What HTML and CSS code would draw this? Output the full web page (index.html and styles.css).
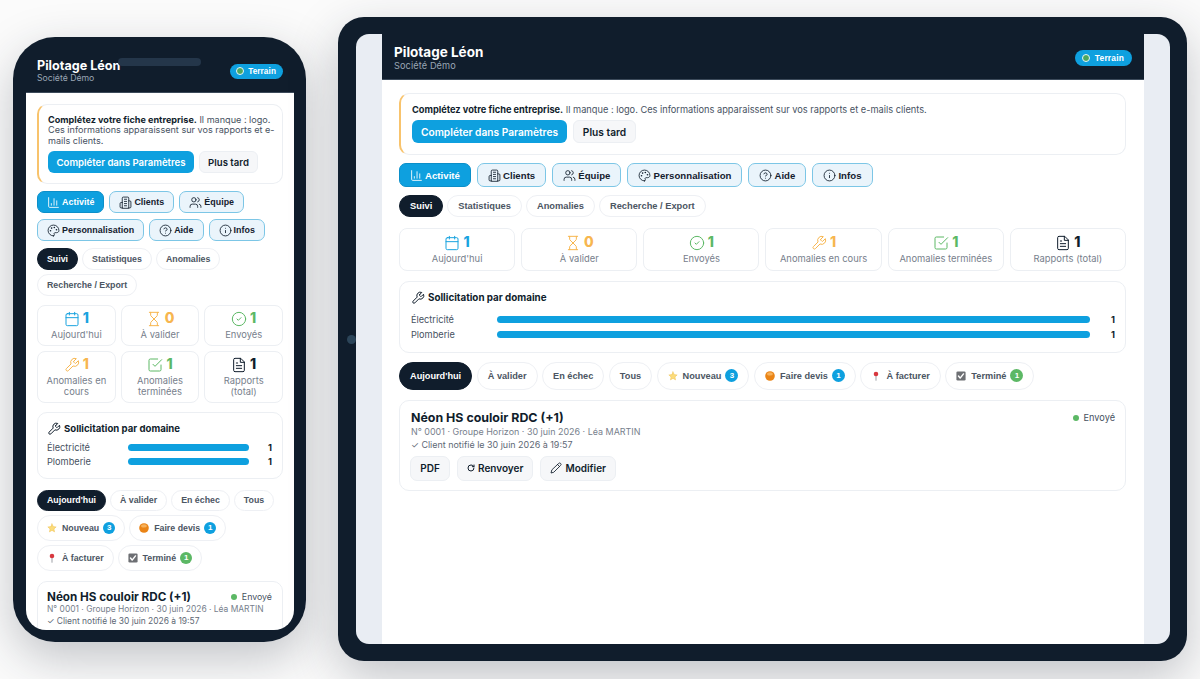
FILE: index.html
```html
<!DOCTYPE html>
<html lang="fr">
<head>
<meta charset="utf-8">
<title>Pilotage Léon</title>
<meta name="viewport" content="width=device-width">
<link rel="stylesheet" href="styles.css">
</head>
<body>

<!-- icons -->
<svg class="sprite" xmlns="http://www.w3.org/2000/svg">
  <symbol id="i-chart" viewBox="0 0 24 24"><path d="M3 3v16a2 2 0 0 0 2 2h16M18 17V9M13 17V5M8 17v-3"/></symbol>
  <symbol id="i-building" viewBox="0 0 24 24"><path d="M6 22V4a2 2 0 0 1 2-2h8a2 2 0 0 1 2 2v18ZM6 12H4a2 2 0 0 0-2 2v6a2 2 0 0 0 2 2h2M18 9h2a2 2 0 0 1 2 2v9a2 2 0 0 1-2 2h-2M10 6h4M10 10h4M10 14h4M10 18h4"/></symbol>
  <symbol id="i-users" viewBox="0 0 24 24"><path d="M16 21v-2a4 4 0 0 0-4-4H6a4 4 0 0 0-4 4v2M22 21v-2a4 4 0 0 0-3-3.87M16 3.13a4 4 0 0 1 0 7.75"/><circle cx="9" cy="7" r="4"/></symbol>
  <symbol id="i-palette" viewBox="0 0 24 24"><path d="M12 22a10 10 0 1 1 10-10c0 2.5-2 4-4.5 4H15a2 2 0 0 0-1.5 3.3c.5.6.3 2.7-1.5 2.7z"/><path class="dots" d="M13.5 6.5h.01M17.5 10.5h.01M8.5 7.5h.01M6.5 12.5h.01"/></symbol>
  <symbol id="i-help" viewBox="0 0 24 24"><circle cx="12" cy="12" r="10"/><path d="M9.09 9a3 3 0 0 1 5.83 1c0 2-3 3-3 3M12 17h.01"/></symbol>
  <symbol id="i-info" viewBox="0 0 24 24"><circle cx="12" cy="12" r="10"/><path d="M12 16v-4M12 8h.01"/></symbol>
  <symbol id="i-calendar" viewBox="0 0 24 24"><rect x="3" y="4" width="18" height="18" rx="2"/><path d="M16 2v4M8 2v4M3 10h18"/></symbol>
  <symbol id="i-hourglass" viewBox="0 0 24 24"><path d="M5 22h14M5 2h14M17 22v-4.172a2 2 0 0 0-.586-1.414L12 12l-4.414 4.414A2 2 0 0 0 7 17.828V22M7 2v4.172a2 2 0 0 0 .586 1.414L12 12l4.414-4.414A2 2 0 0 0 17 6.172V2"/></symbol>
  <symbol id="i-check" viewBox="0 0 24 24"><circle cx="12" cy="12" r="10"/><path d="m9 12 2 2 4-4"/></symbol>
  <symbol id="i-wrench" viewBox="0 0 24 24"><path d="M14.7 6.3a1 1 0 0 0 0 1.4l1.6 1.6a1 1 0 0 0 1.4 0l3.77-3.77a6 6 0 0 1-7.94 7.94l-6.91 6.91a2.12 2.12 0 0 1-3-3l6.91-6.91a6 6 0 0 1 7.94-7.94l-3.76 3.76z"/></symbol>
  <symbol id="i-done" viewBox="0 0 24 24"><path d="m9 11 3 3L22 4M21 12v7a2 2 0 0 1-2 2H5a2 2 0 0 1-2-2V5a2 2 0 0 1 2-2h11"/></symbol>
  <symbol id="i-file" viewBox="0 0 24 24"><path d="M14 2H6a2 2 0 0 0-2 2v16a2 2 0 0 0 2 2h12a2 2 0 0 0 2-2V8zM14 2v6h6M16 13H8M16 17H8M10 9H8"/></symbol>
  <symbol id="i-rotate" viewBox="0 0 24 24"><path d="M21 12a9 9 0 1 1-9-9c2.52 0 4.93 1 6.74 2.74L21 8M21 3v5h-5"/></symbol>
  <symbol id="i-pencil" viewBox="0 0 24 24"><path d="M17 3a2.85 2.83 0 1 1 4 4L7.5 20.5 2 22l1.5-5.5ZM15 5l4 4"/></symbol>
  <symbol id="e-star" viewBox="0 0 24 24"><path class="solid" fill="#fbdc7c" stroke="#eebb45" d="m12 2 3 6.600 7 .8-5.200 4.800 1.400 7.100L12 17.700l-6.200 3.600 1.400-7.100L2 9.400l7-.8z"/></symbol>
  <symbol id="e-orange" viewBox="0 0 24 24"><circle class="solid" cx="12" cy="12" r="11.500" fill="#ea8416" stroke="none"/><ellipse class="solid" cx="12" cy="7" rx="7" ry="4" fill="#f7b15a" stroke="none"/></symbol>
  <symbol id="e-pin" viewBox="0 0 24 24"><path class="pin" d="M12 11v11"/><circle class="solid" cx="12" cy="7" r="5.500" fill="#d8383f" stroke="none"/></symbol>
  <symbol id="e-box" viewBox="0 0 24 24"><rect class="solid" x="1" y="1" width="22" height="22" rx="3" fill="#6d6f73" stroke="none"/><path class="tick" d="m6 12 4 5 8-10"/></symbol>
</svg>

<!-- phone -->
<section class="device phone">
  <div class="notch"></div>
  <div class="screen">
    <div class="app">
      <header class="topbar">
        <div>
          <h1>Pilotage Léon</h1>
          <p>Société Démo</p>
        </div>
        <span class="terrain"><i></i>Terrain</span>
      </header>
      <main class="content">
        <div class="notice">
          <p><b>Complétez votre fiche entreprise.</b> Il manque : logo. Ces informations apparaissent sur vos rapports et e-mails clients.</p>
          <div class="notice-actions">
            <button class="btn-primary">Compléter dans Paramètres</button>
            <button class="btn-light">Plus tard</button>
          </div>
        </div>
        <nav class="nav">
          <a class="nav-item active"><svg><use href="#i-chart"/></svg>Activité</a>
          <a class="nav-item"><svg><use href="#i-building"/></svg>Clients</a>
          <a class="nav-item"><svg><use href="#i-users"/></svg>Équipe</a>
          <a class="nav-item"><svg><use href="#i-palette"/></svg>Personnalisation</a>
          <a class="nav-item"><svg><use href="#i-help"/></svg>Aide</a>
          <a class="nav-item"><svg><use href="#i-info"/></svg>Infos</a>
        </nav>
        <div class="tabs">
          <a class="tab active">Suivi</a>
          <a class="tab">Statistiques</a>
          <a class="tab">Anomalies</a>
          <a class="tab">Recherche / Export</a>
        </div>
        <div class="kpis">
          <div class="kpi blue"><div class="kpi-num"><svg><use href="#i-calendar"/></svg>1</div><span>Aujourd'hui</span></div>
          <div class="kpi orange"><div class="kpi-num"><svg><use href="#i-hourglass"/></svg>0</div><span>À valider</span></div>
          <div class="kpi green"><div class="kpi-num"><svg><use href="#i-check"/></svg>1</div><span>Envoyés</span></div>
          <div class="kpi orange"><div class="kpi-num"><svg><use href="#i-wrench"/></svg>1</div><span>Anomalies en cours</span></div>
          <div class="kpi green"><div class="kpi-num"><svg><use href="#i-done"/></svg>1</div><span>Anomalies terminées</span></div>
          <div class="kpi dark"><div class="kpi-num"><svg><use href="#i-file"/></svg>1</div><span>Rapports (total)</span></div>
        </div>
        <div class="panel">
          <h2><svg><use href="#i-wrench"/></svg>Sollicitation par domaine</h2>
          <div class="bar-row"><span>Électricité</span><div class="bar"></div><b>1</b></div>
          <div class="bar-row"><span>Plomberie</span><div class="bar"></div><b>1</b></div>
        </div>
        <div class="filters">
          <a class="filter active">Aujourd'hui</a>
          <a class="filter">À valider</a>
          <a class="filter">En échec</a>
          <a class="filter">Tous</a>
          <a class="filter"><svg><use href="#e-star"/></svg>Nouveau<em>3</em></a>
          <a class="filter"><svg><use href="#e-orange"/></svg>Faire devis<em>1</em></a>
          <a class="filter"><svg><use href="#e-pin"/></svg>À facturer</a>
          <a class="filter"><svg><use href="#e-box"/></svg>Terminé<em class="ok">1</em></a>
        </div>
        <article class="job">
          <div class="job-head">
            <h3>Néon HS couloir RDC (+1)</h3>
            <span class="status"><i></i>Envoyé</span>
          </div>
          <p>N° 0001 · Groupe Horizon · 30 juin 2026 · Léa MARTIN</p>
          <p>✓ Client notifié le 30 juin 2026 à 19:57</p>
        </article>
      </main>
    </div>
  </div>
</section>

<!-- tablet -->
<section class="device tablet">
  <div class="camera"></div>
  <div class="screen">
    <div class="app">
      <header class="topbar">
        <div>
          <h1>Pilotage Léon</h1>
          <p>Société Démo</p>
        </div>
        <span class="terrain"><i></i>Terrain</span>
      </header>
      <main class="content">
        <div class="notice">
          <p><b>Complétez votre fiche entreprise.</b> Il manque : logo. Ces informations apparaissent sur vos rapports et e-mails clients.</p>
          <div class="notice-actions">
            <button class="btn-primary">Compléter dans Paramètres</button>
            <button class="btn-light">Plus tard</button>
          </div>
        </div>
        <nav class="nav">
          <a class="nav-item active"><svg><use href="#i-chart"/></svg>Activité</a>
          <a class="nav-item"><svg><use href="#i-building"/></svg>Clients</a>
          <a class="nav-item"><svg><use href="#i-users"/></svg>Équipe</a>
          <a class="nav-item"><svg><use href="#i-palette"/></svg>Personnalisation</a>
          <a class="nav-item"><svg><use href="#i-help"/></svg>Aide</a>
          <a class="nav-item"><svg><use href="#i-info"/></svg>Infos</a>
        </nav>
        <div class="tabs">
          <a class="tab active">Suivi</a>
          <a class="tab">Statistiques</a>
          <a class="tab">Anomalies</a>
          <a class="tab">Recherche / Export</a>
        </div>
        <div class="kpis">
          <div class="kpi blue"><div class="kpi-num"><svg><use href="#i-calendar"/></svg>1</div><span>Aujourd'hui</span></div>
          <div class="kpi orange"><div class="kpi-num"><svg><use href="#i-hourglass"/></svg>0</div><span>À valider</span></div>
          <div class="kpi green"><div class="kpi-num"><svg><use href="#i-check"/></svg>1</div><span>Envoyés</span></div>
          <div class="kpi orange"><div class="kpi-num"><svg><use href="#i-wrench"/></svg>1</div><span>Anomalies en cours</span></div>
          <div class="kpi green"><div class="kpi-num"><svg><use href="#i-done"/></svg>1</div><span>Anomalies terminées</span></div>
          <div class="kpi dark"><div class="kpi-num"><svg><use href="#i-file"/></svg>1</div><span>Rapports (total)</span></div>
        </div>
        <div class="panel">
          <h2><svg><use href="#i-wrench"/></svg>Sollicitation par domaine</h2>
          <div class="bar-row"><span>Électricité</span><div class="bar"></div><b>1</b></div>
          <div class="bar-row"><span>Plomberie</span><div class="bar"></div><b>1</b></div>
        </div>
        <div class="filters">
          <a class="filter active">Aujourd'hui</a>
          <a class="filter">À valider</a>
          <a class="filter">En échec</a>
          <a class="filter">Tous</a>
          <a class="filter"><svg><use href="#e-star"/></svg>Nouveau<em>3</em></a>
          <a class="filter"><svg><use href="#e-orange"/></svg>Faire devis<em>1</em></a>
          <a class="filter"><svg><use href="#e-pin"/></svg>À facturer</a>
          <a class="filter"><svg><use href="#e-box"/></svg>Terminé<em class="ok">1</em></a>
        </div>
        <article class="job">
          <div class="job-head">
            <h3>Néon HS couloir RDC (+1)</h3>
            <span class="status"><i></i>Envoyé</span>
          </div>
          <p>N° 0001 · Groupe Horizon · 30 juin 2026 · Léa MARTIN</p>
          <p>✓ Client notifié le 30 juin 2026 à 19:57</p>
          <div class="job-actions">
            <button class="btn-light"><span>PDF</span></button>
            <button class="btn-light"><svg class="tiny"><use href="#i-rotate"/></svg>Renvoyer</button>
            <button class="btn-light"><svg><use href="#i-pencil"/></svg>Modifier</button>
          </div>
        </article>
      </main>
    </div>
  </div>
</section>

</body>
</html>
```

FILE: styles.css
```css
* {
  box-sizing: border-box;
}

html, body {
  margin: 0;
  padding: 0;
}

body {
  position: relative;
  width: 1200px;
  height: 679px;
  overflow: hidden;
  background: #fbfbfb;
  color: #101d2c;
  font-family: "Inter", "Liberation Sans", sans-serif;
  font-size: 9.5px;
}

h1, h2, h3, p {
  margin: 0;
}

.sprite {
  position: absolute;
  width: 0;
  height: 0;
}

svg {
  fill: none;
  stroke: currentColor;
  stroke-width: 1.7;
  stroke-linecap: round;
  stroke-linejoin: round;
  flex: none;
}

.dots { stroke-width: 3; }
.solid { stroke-width: 1; }
.pin { stroke: #a0a3a9; stroke-width: 2.5; }
.tick { stroke: #fff; stroke-width: 3.5; }

/* devices */
.device {
  position: absolute;
  background: #101d2c;
  box-shadow: 0 16px 48px rgba(30, 40, 55, 0.26);
}

.phone {
  left: 13px;
  top: 37px;
  width: 293px;
  height: 605px;
  padding: 13px 12px 12px 13px;
  border-radius: 42px;
}

.tablet {
  left: 338px;
  top: 17px;
  width: 849px;
  height: 644px;
  padding: 17px 17px 17px 18px;
  border-radius: 26px;
}

.notch {
  position: absolute;
  left: 105px;
  top: 21px;
  width: 83px;
  height: 8px;
  border-radius: 4px;
  background: #24364a;
  z-index: 2;
}

.camera {
  position: absolute;
  left: 9px;
  top: 318px;
  width: 9px;
  height: 9px;
  border-radius: 50%;
  background: #2c4559;
}

.screen {
  height: 100%;
  overflow: hidden;
  background: #e9edf3;
}

.phone .screen {
  border-radius: 0 0 20px 20px;
}

.tablet .screen {
  border-radius: 13px;
  display: flex;
  justify-content: center;
}

.app {
  width: 100%;
  background: #fff;
}

.tablet .app {
  width: 762px;
}

/* header */
.topbar {
  display: flex;
  align-items: center;
  justify-content: space-between;
  height: 43px;
  padding: 0 11px;
  background: #101d2c;
  border-bottom: 1px solid #3c4a5a;
}

.tablet .topbar {
  height: 46px;
  padding: 2px 12px 0;
}

.topbar h1 {
  color: #fff;
  font-size: 12.6px;
  line-height: 14px;
  font-weight: 700;
}

.tablet .topbar h1 {
  font-size: 13.5px;
  line-height: 15px;
}

.topbar p {
  color: #9aa6b4;
  font-size: 8.7px;
  line-height: 10px;
}

.tablet .topbar p {
  font-size: 9.2px;
  line-height: 11px;
  letter-spacing: 0.1px;
}

.terrain {
  display: flex;
  align-items: center;
  gap: 4px;
  height: 15px;
  padding: 0 7px 0 6px;
  border-radius: 8px;
  background: #0ea0df;
  color: #fff;
  font-family: "Liberation Sans", sans-serif;
  font-size: 8.2px;
  font-weight: 700;
  letter-spacing: 0.1px;
}

.tablet .terrain {
  gap: 5px;
  height: 16px;
  padding: 0 8px 0 7px;
  font-size: 8.4px;
  letter-spacing: 0.2px;
}

.terrain i {
  width: 8px;
  height: 8px;
  border-radius: 50%;
  background: #4da85e;
  border: 1.5px solid #e3f5fd;
}

/* content */
.content {
  display: flex;
  flex-direction: column;
  gap: 7px;
  padding: 11px 11px 0;
}

.tablet .content {
  gap: 8px;
  padding: 13px 18px 0 17px;
}

.notice {
  padding: 9.5px 5px 10px 9px;
  border: 1px solid #eceff3;
  border-left: 2px solid #f8c36c;
  border-radius: 10px;
  line-height: 10.5px;
  font-size: 9.1px;
  color: #47525f;
}

.tablet .notice {
  padding: 10.5px 12px 11px 11px;
  font-size: 9.24px;
}

.notice b {
  color: #101d2c;
  font-weight: 700;
}

.notice-actions {
  display: flex;
  gap: 5px;
  margin-top: 5px;
}

.tablet .notice-actions {
  margin-top: 5px;
  gap: 6px;
}

button {
  font-family: "Inter", "Liberation Sans", sans-serif;
  font-weight: 600;
  cursor: pointer;
}

.btn-primary {
  height: 22px;
  padding: 0 8px;
  width: 146px;
  border: 0;
  border-radius: 6px;
  background: #0ea0df;
  color: #fff;
  font-size: 9.6px;
  white-space: nowrap;
}

.tablet .btn-primary {
  width: 155px;
  height: 23px;
  font-size: 10.2px;
}

.btn-light {
  display: inline-flex;
  align-items: center;
  justify-content: center;
  gap: 4px;
  height: 22px;
  width: 59px;
  border: 1px solid #eceff3;
  border-radius: 6px;
  background: #f6f7f9;
  color: #101d2c;
  font-size: 9.6px;
}

.tablet .btn-light {
  width: 63px;
  height: 23px;
  font-size: 10.2px;
}

.btn-light svg {
  width: 12px;
  height: 12px;
}

.btn-light svg.tiny {
  width: 8px;
  height: 8px;
  stroke-width: 3;
}

/* main nav */
.nav {
  display: flex;
  flex-wrap: wrap;
  gap: 6px 5px;
}

.tablet .nav {
  gap: 6px;
}

.nav-item {
  display: flex;
  align-items: center;
  gap: 2px;
  height: 22px;
  padding: 0 9px;
  border: 1px solid #7cc6e6;
  border-radius: 7px;
  background: #eaf4fb;
  color: #14202e;
  font-family: "Liberation Sans", sans-serif;
  font-size: 8.9px;
  font-weight: 700;
  letter-spacing: 0.04px;
}

.tablet .nav-item {
  height: 24px;
  padding: 0 10px;
  font-size: 9.6px;
}

.nav-item svg {
  width: 13px;
  height: 13px;
  stroke-width: 1.6;
}

.nav-item.active {
  background: #0ea0df;
  border-color: #0b8fc9;
  color: #fff;
}

/* tabs and filters */
.tabs, .filters {
  display: flex;
  flex-wrap: wrap;
  gap: 4px;
}

.tab, .filter {
  display: flex;
  align-items: center;
  border: 1px solid #eef0f4;
  border-radius: 13px;
  background: #fff;
  color: #4c5663;
  font-family: "Liberation Sans", sans-serif;
  font-size: 8.8px;
  font-weight: 700;
}

.tab {
  height: 22px;
  padding: 0 9px;
}

.tablet .tab {
  padding: 0 10px;
  font-size: 9.3px;
}

.tab.active, .filter.active {
  background: #101d2c;
  border-color: #101d2c;
  color: #fff;
}

.filter {
  height: 21px;
  padding: 0 9px;
}

.filter svg {
  width: 10px;
  height: 10px;
  margin-right: 5px;
}

.filter em {
  display: flex;
  align-items: center;
  justify-content: center;
  width: 12px;
  height: 12px;
  margin-left: 4px;
  border-radius: 50%;
  background: #0ea0df;
  color: #fff;
  font-style: normal;
  font-size: 8px;
}

.filter em.ok {
  background: #5cb865;
}

.phone .filter:nth-child(n+5) {
  height: 26px;
}

.tablet .filters {
  gap: 4.5px;
}

.tablet .filter {
  height: 28px;
  padding: 0 10px;
  border-radius: 14px;
  font-size: 9.2px;
}

.tablet .filter em {
  width: 13px;
  height: 13px;
}

/* counters */
.kpis {
  display: grid;
  grid-template-columns: repeat(3, 1fr);
  gap: 5px;
  margin-top: 2px;
}

.tablet .kpis {
  grid-template-columns: repeat(6, 1fr);
  gap: 6px;
  margin-top: 3px;
}

.kpi {
  padding: 5px 7px 4.5px;
  border: 1px solid #eceff3;
  border-radius: 8px;
  text-align: center;
  color: #77808c;
  font-size: 9.4px;
  line-height: 10.5px;
}

.tablet .kpi {
  padding: 6px 4px 5px;
}

.kpi-num {
  display: flex;
  align-items: center;
  justify-content: center;
  gap: 3px;
  height: 15px;
  margin-bottom: 4px;
  font-size: 14px;
  font-weight: 800;
}

.kpi svg {
  width: 16px;
  height: 16px;
  stroke-width: 1.5;
}

.blue .kpi-num { color: #19a3df; }
.orange .kpi-num { color: #f7b64f; }
.green .kpi-num { color: #5cb865; }
.dark .kpi-num { color: #101d2c; }

/* domain chart */
.panel {
  margin-top: 2px;
  padding: 9px 10px 9px 9px;
  border: 1px solid #eceff3;
  border-radius: 10px;
}

.tablet .panel {
  margin-top: 2px;
  padding: 9px 10px 9px 11px;
  height: 72px;
}

.panel h2 {
  display: flex;
  align-items: center;
  gap: 3px;
  height: 14px;
  margin-bottom: 5px;
  font-size: 9.6px;
  font-weight: 700;
}

.tablet .panel h2 {
  gap: 3px;
  margin-bottom: 7px;
  font-size: 9.8px;
}

.panel h2 svg {
  width: 14px;
  height: 14px;
}

.bar-row {
  display: grid;
  grid-template-columns: 81px 1fr 23px;
  align-items: center;
  height: 14px;
  color: #47525f;
  font-size: 9.2px;
}

.tablet .bar-row {
  grid-template-columns: 86px 1fr 25px;
  height: 15px;
}

.bar-row b {
  text-align: right;
  color: #101d2c;
}

.bar {
  height: 7px;
  border-radius: 4px;
  background: #0ea0df;
}

/* job card */
.phone .filters {
  margin-top: 4px;
}

.tablet .filters {
  margin-top: 1px;
}

.phone .job {
  margin-top: 3px;
}

.tablet .job {
  margin-top: 2px;
}

.job {
  padding: 9px 10px 9px 9px;
  border: 1px solid #eceff3;
  border-radius: 10px;
  color: #77808c;
  font-size: 8.45px;
  line-height: 12.5px;
}

.tablet .job {
  padding: 10px 10px 9px 11px;
  font-size: 8.95px;
  line-height: 13px;
}

.job p:last-of-type {
  color: #5d6774;
}

.job-head {
  display: flex;
  align-items: center;
  justify-content: space-between;
  height: 13px;
  margin-bottom: -1px;
}

.tablet .job-head {
  height: 14px;
  margin-bottom: 0;
}

.job h3 {
  color: #101d2c;
  font-size: 11.7px;
  font-weight: 700;
}

.tablet .job h3 {
  font-size: 12.4px;
}

.status {
  display: flex;
  align-items: center;
  gap: 5px;
  color: #47525f;
  font-size: 8.8px;
}

.tablet .status {
  font-size: 9.2px;
}

.status i {
  width: 6px;
  height: 6px;
  border-radius: 50%;
  background: #5cb865;
}

.job-actions {
  display: flex;
  gap: 7px;
  margin: 5px 0 0 -1px;
}

.tablet .job-actions .btn-light {
  width: auto;
  height: 25px;
  padding: 0 9px;
  gap: 3px;
  border-radius: 7px;
  font-size: 10px;
}

.tablet .job-actions .btn-light:first-child {
  width: 40px;
}
```
